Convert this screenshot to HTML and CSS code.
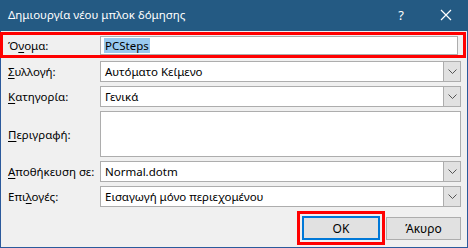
FILE: index.html
```html
<!DOCTYPE html>
<html lang="el">
<head>
  <meta charset="UTF-8" />
  <title>Δημιουργία νέου μπλοκ δόμησης</title>
  <link rel="stylesheet" href="styles.css">
</head>
<body>

<div class="dialog">
  <div class="titlebar">
    <span class="title">Δημιουργία νέου μπλοκ δόμησης</span>
    <span class="help">?</span>
    <svg class="close" width="12" height="12" viewBox="0 0 12 12">
      <path d="M1 1 L11 11 M11 1 L1 11" stroke="#fff" stroke-width="1.2" fill="none"/>
    </svg>
  </div>

  <div class="content">
    <div class="row row-name">
      <label class="label">Ό<u>ν</u>ομα:</label>
      <div class="field"><span class="selected">PCSteps</span></div>
    </div>

    <div class="row">
      <label class="label"><u>Σ</u>υλλογή:</label>
      <div class="field select">
        <span class="value">Αυτόματο Κείμενο</span>
        <span class="arrow"><svg width="9" height="5" viewBox="0 0 9 5"><path d="M0.5 0.5 L4.5 4.5 L8.5 0.5" stroke="#555" fill="none"/></svg></span>
      </div>
    </div>

    <div class="row">
      <label class="label"><u>Κ</u>ατηγορία:</label>
      <div class="field select">
        <span class="value">Γενικά</span>
        <span class="arrow"><svg width="9" height="5" viewBox="0 0 9 5"><path d="M0.5 0.5 L4.5 4.5 L8.5 0.5" stroke="#555" fill="none"/></svg></span>
      </div>
    </div>

    <div class="row row-tall">
      <label class="label"><u>Π</u>εριγραφή:</label>
      <div class="field"></div>
    </div>

    <div class="row">
      <label class="label"><u>Α</u>ποθήκευση σε:</label>
      <div class="field select">
        <span class="value">Normal.dotm</span>
        <span class="arrow"><svg width="9" height="5" viewBox="0 0 9 5"><path d="M0.5 0.5 L4.5 4.5 L8.5 0.5" stroke="#555" fill="none"/></svg></span>
      </div>
    </div>

    <div class="row">
      <label class="label">Επι<u>λ</u>ογές:</label>
      <div class="field select">
        <span class="value">Εισαγωγή μόνο περιεχομένου</span>
        <span class="arrow"><svg width="9" height="5" viewBox="0 0 9 5"><path d="M0.5 0.5 L4.5 4.5 L8.5 0.5" stroke="#555" fill="none"/></svg></span>
      </div>
    </div>

    <div class="buttons">
      <div class="ok-wrap">
        <button class="btn btn-default">OK</button>
      </div>
      <button class="btn">Άκυρο</button>
    </div>
  </div>
</div>

</body>
</html>
```

FILE: styles.css
```css
* {
  margin: 0;
  padding: 0;
  box-sizing: border-box;
}
body {
  font-family: 'Noto Sans', 'DejaVu Sans', sans-serif;
  font-size: 11.5px;
  color: #000;
  background: #f0f0f0;
}

.dialog {
  width: 468px;
  height: 248px;
  background: #f0f0f0;
  border: 1px solid #2b5a9c;
  border-top: none;
}

.titlebar {
  height: 31px;
  margin: 0 -1px;
  background: #245a83;
  color: #fff;
  display: flex;
  align-items: center;
  padding: 0 0 2px 8px;
}
.title {
  flex: 1;
  font-size: 11.5px;
}
.help {
  font-size: 13px;
  margin-right: 36px;
}
.close {
  margin-right: 16px;
}

.content {
  padding: 1px 6px 0 0;
}

.row {
  display: flex;
  align-items: center;
  height: 21px;
  margin-bottom: 4px;
}
.row-name {
  height: 26px;
  margin-left: -1px;
  margin-right: -5px;
  padding-right: 5px;
  padding-left: 1px;
  border: 3px solid #ff0000;
  margin-bottom: 3px;
}
.row-name .field {
  height: 19px;
}
.row-tall {
  height: 46px;
}
.row-tall .field {
  height: 46px;
}

.label {
  width: 99px;
  padding-left: 7px;
  white-space: nowrap;
}
.row-name .label {
  width: 96px;
  padding-left: 4px;
}
u {
  text-decoration: underline;
  text-underline-offset: 2px;
}

.field {
  flex: 1;
  height: 21px;
  background: #fff;
  border: 1px solid #adadad;
  display: flex;
  align-items: center;
  padding-left: 3px;
}
.selected {
  background: #99c9ef;
  padding: 0 1px;
}
.select .value {
  flex: 1;
  padding-left: 1px;
}
.arrow {
  width: 17px;
  height: 19px;
  background: #e1e1e1;
  border-left: 1px solid #adadad;
  display: flex;
  align-items: center;
  justify-content: center;
}

.buttons {
  display: flex;
  justify-content: flex-end;
  align-items: center;
}
.ok-wrap {
  border: 3px solid #ff0000;
  padding: 2px;
  margin-right: 1px;
}
.btn {
  font-family: inherit;
  font-size: 12px;
  width: 75px;
  height: 23px;
  background: #e1e1e1;
  border: 1px solid #adadad;
  color: #000;
}
.btn-default {
  width: 78px;
  height: 24px;
  border: 2px solid #0078d7;
}
```
